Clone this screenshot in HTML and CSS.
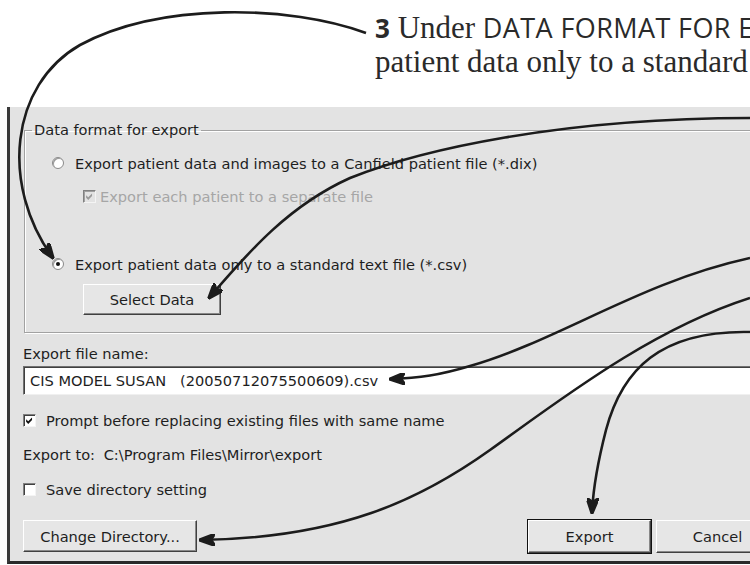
FILE: index.html
```html
<!DOCTYPE html>
<html lang="en">
<head>
    <meta charset="UTF-8">
    <meta name="viewport" content="width=device-width, initial-scale=1.0">
    <title>Export patient data</title>
    <link rel="stylesheet" href="styles.css">
</head>
<body>
    <div class="page">
        <div class="caption">
            <p class="line"><b class="step">3</b> Under <span class="caps">DATA FORMAT FOR EXPORT</span>, select</p>
            <p class="line">patient data only to a standard text file.</p>
        </div>

        <div class="dialog">
            <fieldset class="group">
                <legend>Data format for export</legend>
                <div class="opt">
                    <span class="radio"></span>
                    Export patient data and images to a Canfield patient file (*.dix)
                </div>
                <div class="opt sub disabled">
                    <span class="check">
                        <svg viewBox="0 0 13 13"><path d="M2.5 5 L5 7.5 L9.5 3 L9.5 6 L5 10.5 L2.5 8 Z"/></svg>
                    </span>
                    Export each patient to a separate file
                </div>
                <div class="opt second">
                    <span class="radio on"></span>
                    Export patient data only to a standard text file (*.csv)
                </div>
                <button class="btn select">Select Data</button>
            </fieldset>

            <div class="label">Export file name:</div>
            <div class="field">CIS MODEL SUSAN&nbsp;&nbsp;&nbsp;(20050712075500609).csv</div>

            <div class="opt box prompt">
                <span class="check">
                    <svg viewBox="0 0 13 13"><path d="M2.5 5 L5 7.5 L9.5 3 L9.5 6 L5 10.5 L2.5 8 Z"/></svg>
                </span>
                Prompt before replacing existing files with same name
            </div>

            <div class="label target">Export to: <span class="path">C:\Program Files\Mirror\export</span></div>

            <div class="opt box save">
                <span class="check"></span>
                Save directory setting
            </div>

            <div class="buttons">
                <button class="btn change">Change Directory...</button>
                <div class="actions">
                    <button class="btn default">Export</button>
                    <button class="btn">Cancel</button>
                </div>
            </div>
        </div>

        <!-- callout arrows drawn over the dialog -->
        <svg class="arrows" viewBox="0 0 750 565">
            <defs>
                <marker id="head" viewBox="0 0 16 12" refX="15" refY="6" markerWidth="16" markerHeight="12" markerUnits="userSpaceOnUse" orient="auto">
                    <path d="M0,0 L16,6 L0,12 L4,6 Z" fill="#1c1c1c"/>
                </marker>
            </defs>
            <path d="M366,33 C290,5 160,2 80,45 C10,85 0,185 53,258" marker-end="url(#head)"/>
            <path d="M750,118 C560,118 420,150 350,178 C290,205 250,250 209,298" marker-end="url(#head)"/>
            <path d="M750,258 C640,282 560,340 470,366 C440,375 420,378 390,379" marker-end="url(#head)"/>
            <path d="M750,298 C650,330 560,400 490,450 C420,500 340,538 200,540" marker-end="url(#head)"/>
            <path d="M750,332 C660,330 622,370 606,430 C597,465 593,490 592,513" marker-end="url(#head)"/>
        </svg>
    </div>
</body>
</html>
```

FILE: styles.css
```css
body {
    margin: 0;
    background-color: #fff;
}

.page {
    position: relative;
    width: 750px;
    height: 565px;
    overflow: hidden;
}

/* caption above the screenshot */
.caption {
    height: 107px;
    box-sizing: border-box;
    padding: 11px 0 0 375px;
    font-family: "Liberation Serif", serif;
    font-size: 31px;
    line-height: 34px;
    color: #2a2a2a;
    white-space: nowrap;
}

.line {
    margin: 0;
}

.step {
    font-family: "Open Sans", sans-serif;
    font-weight: bold;
    font-size: 26px;
}

.caps {
    font-family: "Open Sans", sans-serif;
    font-size: 27px;
    letter-spacing: 0.4px;
}

/* the dialog */
.dialog {
    width: 785px;
    height: 457px;
    margin-left: 7px;
    box-sizing: border-box;
    padding: 14px 13px 0 13px;
    background-color: #e3e3e3;
    border-left: 3px solid #3a3a3a;
    border-bottom: 3px solid #2a2a2a;
    font-family: "DejaVu Sans", sans-serif;
    font-size: 14.6px;
    color: #1e1e1e;
}

.group {
    margin: 0 0 0 1px;
    padding: 14px 0 17px 7px;
    border: 1px solid #a2a2a2;
    box-shadow: inset 1px 1px 0 #fff, 1px 1px 0 #fff;
}

.group legend {
    padding: 0 2px;
    line-height: 18px;
}

.group .opt {
    margin-left: 20px;
}

.opt {
    display: flex;
    align-items: center;
    height: 20px;
}

.group .sub {
    margin: 13px 0 0 51px;
}

.group .second {
    margin-top: 48px;
}

.disabled {
    color: #a6a6a6;
}

.radio {
    width: 12px;
    height: 12px;
    margin-right: 11px;
    box-sizing: border-box;
    border-radius: 50%;
    background-color: #fff;
    border: 1px solid #8a8a8a;
    box-shadow: inset 1px 1px 0 #9a9a9a;
    display: flex;
    align-items: center;
    justify-content: center;
}

.radio.on::after {
    content: "";
    width: 4px;
    height: 4px;
    border-radius: 50%;
    background-color: #111;
}

.check {
    width: 13px;
    height: 13px;
    margin-right: 10px;
    box-sizing: border-box;
    background-color: #fff;
    border-top: 1px solid #808080;
    border-left: 1px solid #808080;
    border-right: 1px solid #f4f4f4;
    border-bottom: 1px solid #f4f4f4;
    box-shadow: inset 1px 1px 0 #404040;
    display: flex;
}

.check svg {
    width: 11px;
    height: 11px;
    fill: #111;
}

.sub .check {
    margin-right: 4px;
    background-color: #e3e3e3;
    box-shadow: inset 1px 1px 0 #a0a0a0;
}

.sub .check svg {
    fill: #9a9a9a;
}

.btn {
    display: block;
    height: 32px;
    padding: 0;
    box-sizing: border-box;
    background-color: #e6e6e6;
    border-top: 1px solid #fff;
    border-left: 1px solid #fff;
    border-right: 1px solid #404040;
    border-bottom: 1px solid #404040;
    box-shadow: inset -1px -1px 0 #888;
    font-family: inherit;
    font-size: 14.6px;
    color: #1e1e1e;
}

.select {
    width: 138px;
    height: 31px;
    margin: 10px 0 0 51px;
}

.label {
    height: 20px;
    line-height: 20px;
    margin-top: 11px;
}

.field {
    height: 29px;
    margin-top: 2px;
    box-sizing: border-box;
    padding-left: 6px;
    line-height: 27px;
    background-color: #fff;
    border-top: 1px solid #707070;
    border-left: 1px solid #707070;
    border-bottom: 1px solid #f0f0f0;
    box-shadow: inset 1px 1px 0 #404040;
    white-space: nowrap;
}

.prompt {
    margin-top: 15px;
}

.target {
    margin-top: 15px;
}

.path {
    margin-left: 4px;
}

.save {
    margin-top: 14px;
}

.buttons {
    display: flex;
    justify-content: space-between;
    margin-top: 21px;
}

.change {
    width: 174px;
}

.actions {
    display: flex;
    gap: 5px;
}

.actions .btn {
    width: 123px;
    height: 33px;
}

.default {
    outline: 1px solid #111;
}

.arrows {
    position: absolute;
    top: 0;
    left: 0;
    width: 750px;
    height: 565px;
    fill: none;
    stroke: #1c1c1c;
    stroke-width: 2.6;
    pointer-events: none;
}
```
